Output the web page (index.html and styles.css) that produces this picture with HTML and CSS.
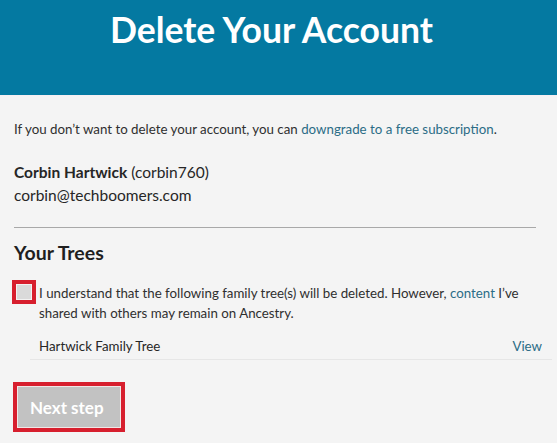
FILE: index.html
```
<!DOCTYPE html>
<html lang="en">
<head>
<meta charset="utf-8">
<title>Delete Your Account</title>
<link rel="stylesheet" href="styles.css">
</head>
<body>
<header class="hero">
  <h1 class="hero-title">Delete Your Account</h1>
</header>
<main class="content">
  <p class="intro">If you don’t want to delete your account, you can <a class="link" href="#">downgrade to a free subscription</a>.</p>
  <div class="user">
    <div class="user-line"><strong class="user-name">Corbin Hartwick</strong> (corbin760)</div>
    <div class="user-line">corbin@techboomers.com</div>
  </div>
  <hr class="divider">
  <h2 class="section-title">Your Trees</h2>
  <label class="confirm">
    <span class="check"><span class="check-box"></span></span>
    <span class="confirm-text">I understand that the following family tree(s) will be deleted. However, <a class="link" href="#">content</a> I’ve shared with others may remain on Ancestry.</span>
  </label>
  <div class="tree-row">
    <span class="tree-name">Hartwick Family Tree</span>
    <a class="link" href="#">View</a>
  </div>
  <button class="next" type="button">Next step</button>
</main>
</body>
</html>
```
FILE: styles.css
```
html, body {
  margin: 0;
  padding: 0;
}
body {
  background: #f4f4f4;
  color: #2f2f2f;
  font-family: Lato, "Open Sans", sans-serif;
  font-size: 13.3px;
  line-height: 20px;
}
.hero {
  background: #0479a1;
  height: 96px;
  border-bottom: 1px solid #f6eef2;
  box-sizing: border-box;
  padding: 9px 14px 0 0;
}
.hero-title {
  margin: 0;
  text-align: center;
  color: #fff;
  font-size: 35.5px;
  line-height: 42px;
  font-weight: 700;
}
.content {
  padding: 23px 21px 0 14px;
}
.intro {
  margin: 0;
}
.link {
  color: #2b6c86;
  text-decoration: none;
}
.user {
  margin-top: 22px;
  font-size: 15.5px;
  line-height: 23px;
  color: #262626;
}
.user-name {
  font-weight: 700;
}
.divider {
  margin: 20px 0 0;
  border: 0;
  border-top: 1px solid #a8a8a8;
  height: 0;
}
.section-title {
  margin: 13px 0 0;
  font-size: 19.5px;
  line-height: 24px;
  font-weight: 700;
  color: #1f1f1f;
}
.confirm {
  display: flex;
  align-items: flex-start;
  gap: 3px;
  margin-top: 18px;
  margin-left: -2px;
}
.check {
  flex: none;
  width: 24px;
  height: 24px;
  box-sizing: border-box;
  border: 4px solid #d71f2e;
  margin-top: -3px;
}
.check-box {
  display: block;
  width: 16px;
  height: 16px;
  box-sizing: border-box;
  background: #dadada;
  border: 1px solid #f2f2f2;
}
.tree-row {
  display: flex;
  justify-content: space-between;
  margin: 5px -16px 0 16px;
  padding: 8px 10px 3px 9px;
  border-bottom: 1px solid #e6e6e6;
}
.tree-name {
  color: #262626;
}
.next {
  display: block;
  margin: 22px 0 0 -1px;
  width: 112px;
  height: 50px;
  box-sizing: border-box;
  border: 4px solid #d71f2e;
  background: #c2c2c2;
  box-shadow: inset 0 0 0 1px #f1e6e6;
  color: #fff;
  font-family: Lato, "Open Sans", sans-serif;
  font-size: 17px;
  font-weight: 700;
  text-align: left;
  padding: 0 0 0 13px;
  cursor: pointer;
}
```
